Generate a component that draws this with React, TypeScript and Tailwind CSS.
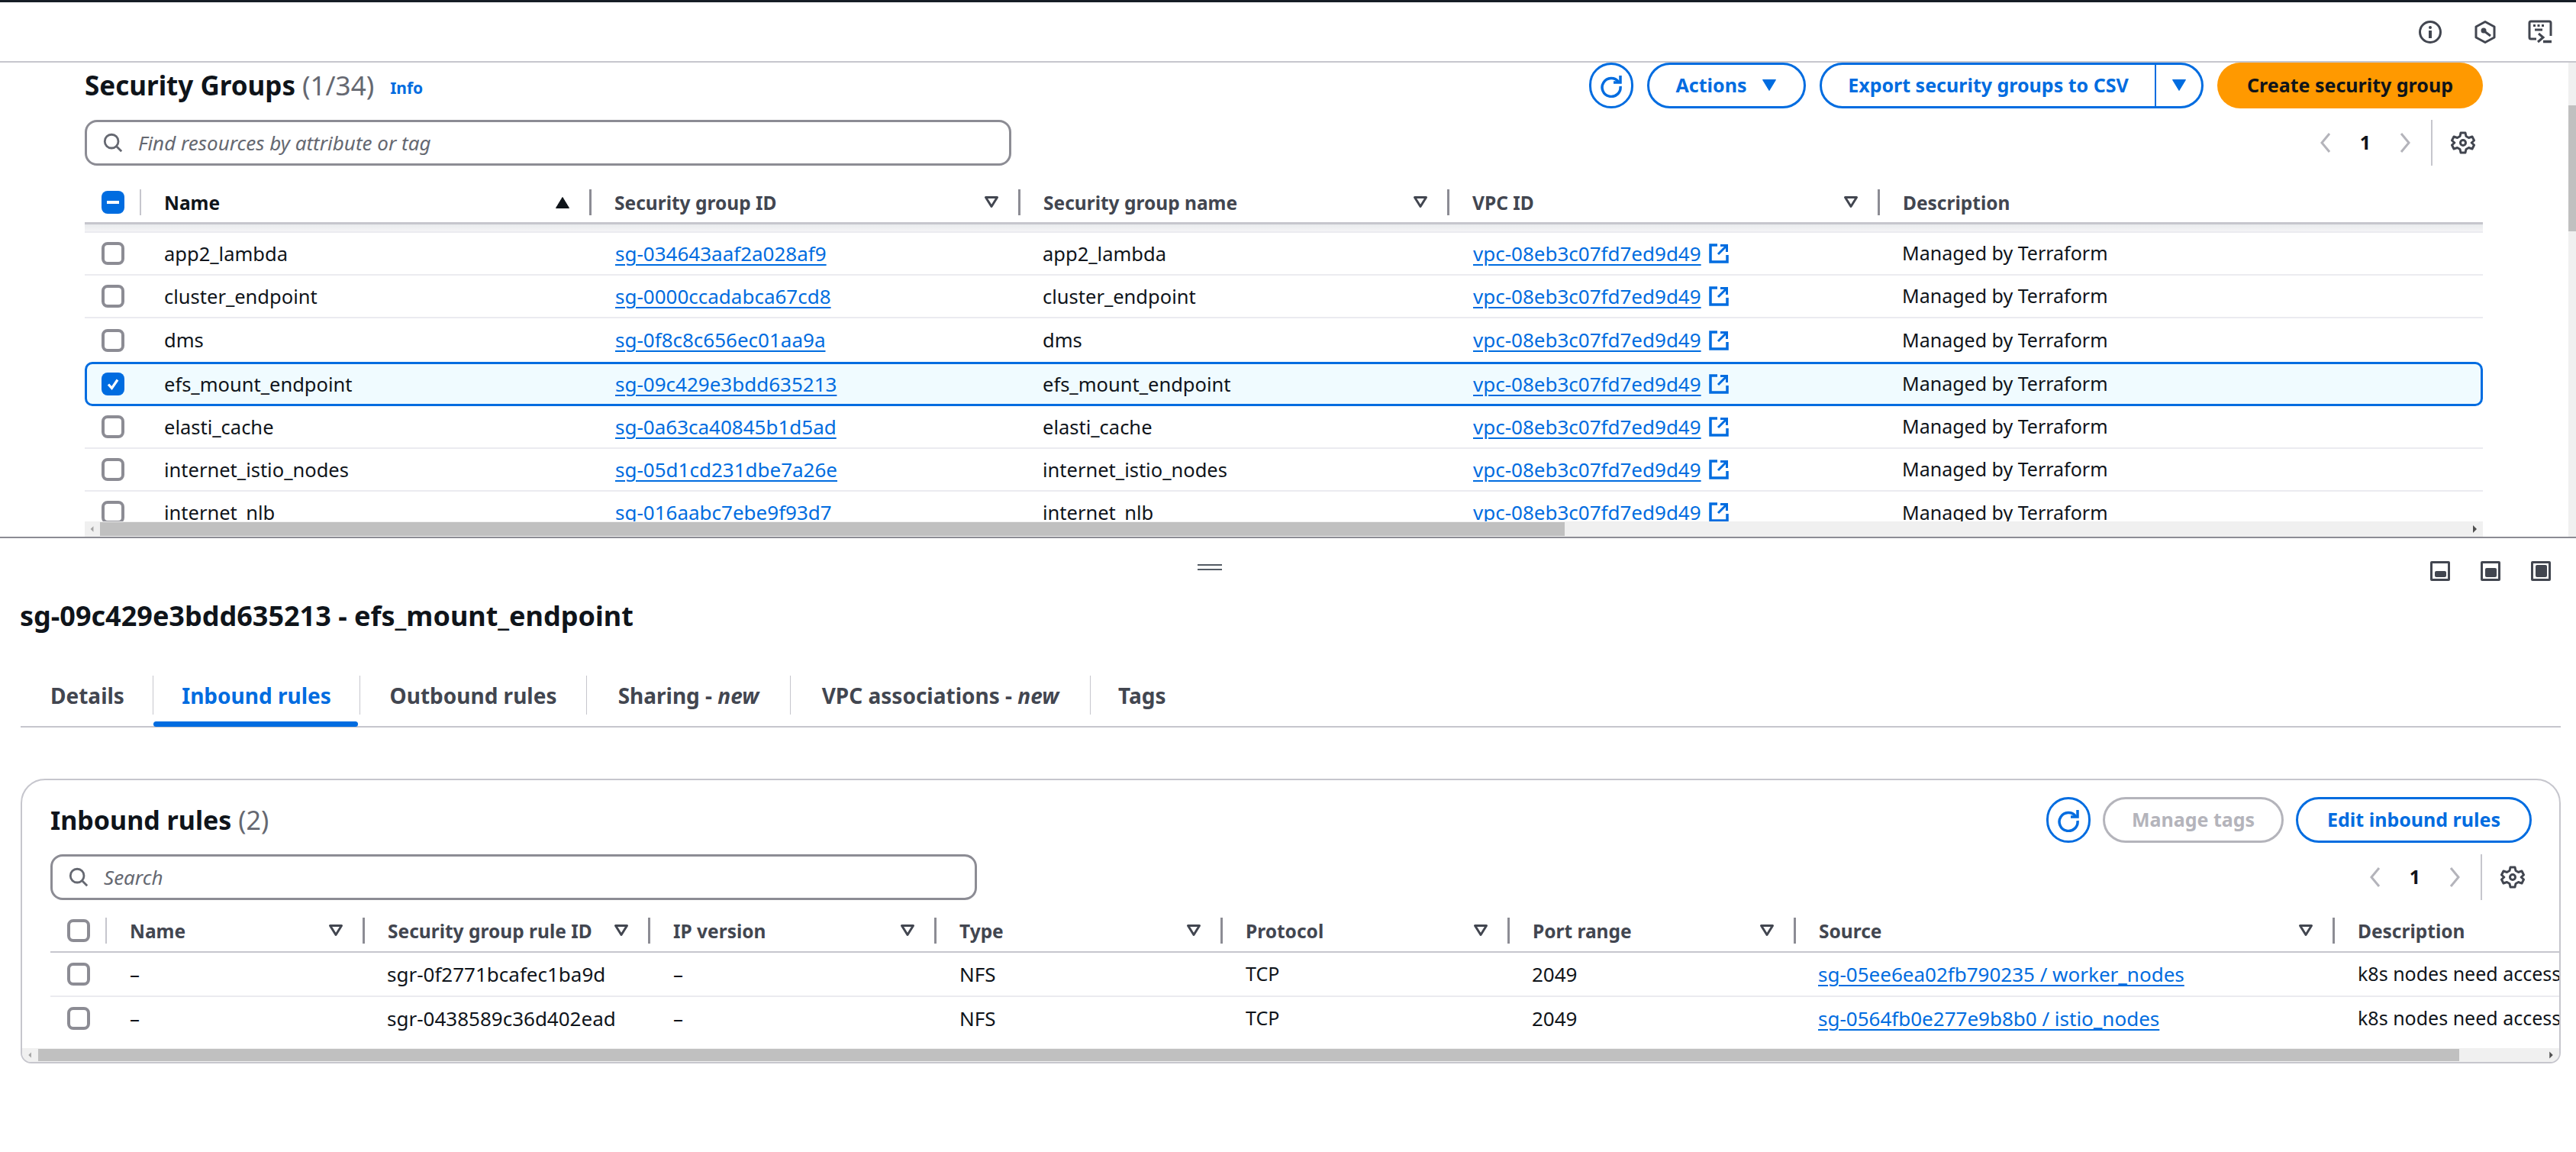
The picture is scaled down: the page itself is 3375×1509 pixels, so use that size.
import React from "react";

const font = { fontFamily: '"Noto Sans", sans-serif' };

function Tri({ dir = "down", color = "#424650", outline = false }: { dir?: "up" | "down"; color?: string; outline?: boolean }) {
  const pts = dir === "down" ? "1.5,2.5 18.5,2.5 10,16.5" : "1.5,17.5 18.5,17.5 10,3.5";
  return (
    <svg width="20" height="20" viewBox="0 0 20 20" className="shrink-0">
      {outline ? <polygon points="2.5,3.5 17.5,3.5 10,15.5" fill="none" stroke={color} strokeWidth="3" strokeLinejoin="round" /> : <polygon points={pts} fill={color} stroke={color} strokeWidth="1" strokeLinejoin="round" />}
    </svg>
  );
}

function Check({ state = "off" }: { state?: "off" | "on" | "mixed" }) {
  if (state === "off") return <span className="block w-[30px] h-[30px] shrink-0 rounded-[8px] border-[4px] border-[#8c8c94] bg-white" />;
  return (
    <span className="flex items-center justify-center w-[30px] h-[30px] shrink-0 rounded-[8px] bg-[#006ce0]">
      {state === "on" ? (
        <svg width="22" height="22" viewBox="0 0 22 22"><path d="M5 11.5 L9.5 16.5 L17 5.5" fill="none" stroke="white" strokeWidth="3.2" /></svg>
      ) : (
        <span className="block w-[16px] h-[4px] bg-white" />
      )}
    </span>
  );
}

function Search({ text, w }: { text: string; w: string }) {
  return (
    <div className={`flex items-center h-[60px] rounded-[16px] border-[3px] border-[#8c8c94] bg-white pl-[20px] ${w}`}>
      <svg width="28" height="28" viewBox="0 0 30 30" className="shrink-0">
        <circle cx="13" cy="13" r="9.5" fill="none" stroke="#656871" strokeWidth="3" />
        <path d="M20 20 L27 27" stroke="#656871" strokeWidth="3" />
      </svg>
      <span className="ml-[19px] text-[26px] italic text-[#656871]">{text}</span>
    </div>
  );
}

function Refresh() {
  return (
    <button className="flex items-center justify-center w-[58px] h-[60px] rounded-full border-[3px] border-[#006ce0] bg-white shrink-0">
      <svg width="32" height="32" viewBox="0 0 32 32">
        <path d="M25.5 11 A12 12 0 1 0 28 17" fill="none" stroke="#006ce0" strokeWidth="3.5" />
        <path d="M28 3 V12 H19" fill="none" stroke="#006ce0" strokeWidth="3.5" />
      </svg>
    </button>
  );
}

function Btn({ w, color = "#006ce0", children }: { w: string; color?: string; children: React.ReactNode }) {
  return (
    <button className={`flex items-center justify-center h-[60px] rounded-full border-[3px] bg-white font-bold text-[25px] shrink-0 ${w}`} style={{ borderColor: color, color }}>
      {children}
    </button>
  );
}

function Gear() {
  return (
    <svg width="32" height="32" viewBox="0 0 32 32" className="shrink-0">
      <path d="M13 3 H19 L20 7.5 L23.5 9.5 L28 8 L30.5 13 L27.2 16 L30.5 19 L28 24 L23.5 22.5 L20 24.5 L19 29 H13 L12 24.5 L8.5 22.5 L4 24 L1.5 19 L4.8 16 L1.5 13 L4 8 L8.5 9.5 L12 7.5 Z" fill="none" stroke="#424650" strokeWidth="3" strokeLinejoin="round" />
      <circle cx="16" cy="16" r="3.5" fill="none" stroke="#424650" strokeWidth="3" />
    </svg>
  );
}

function Pager() {
  return (
    <div className="flex items-center h-[60px]">
      <svg width="16" height="28" viewBox="0 0 16 28"><path d="M13 2 L3 14 L13 26" fill="none" stroke="#b4b4bb" strokeWidth="3" /></svg>
      <span className="text-[25px] font-bold text-[#0f141a] mx-[37px]">1</span>
      <svg width="16" height="28" viewBox="0 0 16 28"><path d="M3 2 L13 14 L3 26" fill="none" stroke="#b4b4bb" strokeWidth="3" /></svg>
      <span className="block w-[2px] h-[60px] bg-[#c6c6cd] ml-[26px] mr-[24px]" />
      <Gear />
    </div>
  );
}

function ExtLink() {
  return (
    <svg width="26" height="26" viewBox="0 0 26 26" className="shrink-0 ml-[10px]">
      <path d="M11 2 H2 V24 H24 V15" fill="none" stroke="#006ce0" strokeWidth="3.5" />
      <path d="M12 14 L22 4 M15 2.5 H23.5 V11" fill="none" stroke="#006ce0" strokeWidth="3" />
    </svg>
  );
}

function Link({ children }: { children: React.ReactNode }) {
  return <a className="text-[26px] text-[#006ce0] underline decoration-2 underline-offset-[4px]">{children}</a>;
}

function HeadCell({ w, label, dark, arrow = "filter", last }: { w: string; label: string; dark?: boolean; arrow?: "filter" | "sort" | "none"; last?: boolean }) {
  return (
    <div className={`flex items-center h-[34px] shrink-0 pl-[30px] ${last ? "" : "pr-[20px]"} ${w}`}>
      <span className={`text-[24.5px] font-bold whitespace-nowrap mt-[3px] ${dark ? "text-[#0f141a]" : "text-[#424650]"}`}>{label}</span>
      <span className="grow" />
      {arrow === "filter" && <Tri outline />}
      {arrow === "sort" && <Tri dir="up" color="#0f141a" />}
      {!last && <span className="block w-[3px] h-[34px] bg-[#8c8c94] ml-[25px] -mr-[20px] shrink-0" />}
    </div>
  );
}

const sgRows = [
  ["app2_lambda", "sg-034643aaf2a028af9"],
  ["cluster_endpoint", "sg-0000ccadabca67cd8"],
  ["dms", "sg-0f8c8c656ec01aa9a"],
  ["efs_mount_endpoint", "sg-09c429e3bdd635213"],
  ["elasti_cache", "sg-0a63ca40845b1d5ad"],
  ["internet_istio_nodes", "sg-05d1cd231dbe7a26e"],
  ["internet_nlb", "sg-016aabc7ebe9f93d7"],
];

function rowClass(i: number) {
  if (i === 3) return "h-[58px] shrink-0 rounded-[10px] border-[3px] border-[#006ce0] bg-[#f0fbff] pl-[19px] items-center";
  if (i === 2) return "h-[57px] shrink-0 pl-[22px] items-center";
  if (i === 6) return "h-[39px] shrink-0 pl-[22px] items-start pt-[12px] leading-[30px]";
  return "h-[56px] shrink-0 border-b-[2px] border-[#ebebf0] pl-[22px] items-center";
}

function SgRow({ name, id, i }: { name: string; id: string; i: number }) {
  return (
    <div className={`flex text-[25.5px] text-[#0f141a] whitespace-nowrap ${rowClass(i)}`}>
      <Check state={i === 3 ? "on" : "off"} />
      <div className="w-[643px] pl-[52px] shrink-0">{name}</div>
      <div className="w-[560px] shrink-0"><Link>{id}</Link></div>
      <div className="w-[564px] shrink-0">{name}</div>
      <div className="w-[562px] shrink-0 flex items-center"><Link>vpc-08eb3c07fd7ed9d49</Link><ExtLink /></div>
      <div className="text-[25px]">Managed by Terraform</div>
    </div>
  );
}

const ruleRows = [
  ["sgr-0f2771bcafec1ba9d", "sg-05ee6ea02fb790235 / worker_nodes"],
  ["sgr-0438589c36d402ead", "sg-0564fb0e277e9b8b0 / istio_nodes"],
];

export default function App() {
  return (
    <div className="relative w-[3375px] h-[1509px] overflow-hidden bg-white text-[#0f141a]" style={font}>
      <div className="h-[3px] bg-[#161d26]" />
      <div className="flex items-center justify-end h-[79px] border-b-[2px] border-[#c6c6cd] gap-[40px] pr-[31px]">
        <svg width="32" height="32" viewBox="0 0 32 32">
          <circle cx="16" cy="16" r="13.5" fill="none" stroke="#424650" strokeWidth="3" />
          <circle cx="16" cy="10" r="2" fill="#424650" />
          <path d="M16 14 V24" stroke="#424650" strokeWidth="4" />
        </svg>
        <svg width="32" height="32" viewBox="0 0 32 32">
          <path d="M16 2.5 L28 9 V23 L16 29.5 L4 23 V9 Z" fill="none" stroke="#424650" strokeWidth="3" strokeLinejoin="round" />
          <circle cx="14" cy="14" r="3.5" fill="#424650" />
          <path d="M15 15 L23 21" stroke="#424650" strokeWidth="3" />
        </svg>
        <svg width="32" height="32" viewBox="0 0 32 32">
          <path d="M11 25 H4 Q2 25 2 23 V4 Q2 2 4 2 H28 Q30 2 30 4 V21" fill="none" stroke="#424650" strokeWidth="3" />
          <path d="M7 7.5 H10 M12.5 7.5 H15.5 M18 7.5 H21" stroke="#424650" strokeWidth="3" />
          <path d="M9 13 H19 M14 18 L20 23 L13 29" fill="none" stroke="#424650" strokeWidth="3" />
          <path d="M20 28.5 H31" stroke="#424650" strokeWidth="3.5" />
        </svg>
      </div>

      <div className="flex h-[621px]">
        <div className="flex flex-col w-[3365px] pl-[111px] pr-[112px] overflow-hidden">
          <div className="flex items-center h-[60px] shrink-0">
            <h1 className="text-[35px] font-bold whitespace-nowrap">Security Groups <span className="font-normal text-[#656871]">(1/34)</span></h1>
            <span className="ml-[21px] mt-[8px] text-[21px] font-bold text-[#006ce0]">Info</span>
            <span className="grow" />
            <div className="flex items-center gap-[18px]">
              <Refresh />
              <Btn w="w-[208px]"><span>Actions</span><span className="ml-[20px]"><Tri color="#006ce0" /></span></Btn>
              <div className="flex items-center w-[503px] h-[60px] rounded-full border-[3px] border-[#006ce0] font-bold text-[25px] text-[#006ce0] shrink-0">
                <span className="flex items-center justify-center w-[438px] h-full border-r-[2px] border-[#006ce0]">Export security groups to CSV</span>
                <span className="flex items-center justify-center grow"><Tri color="#006ce0" /></span>
              </div>
              <button className="flex items-center justify-center w-[348px] h-[60px] rounded-full bg-[#ff9900] font-bold text-[25px] text-[#0f141a] shrink-0">Create security group</button>
            </div>
          </div>
          <div className="flex items-center justify-between mt-[15px] h-[60px] shrink-0 pr-[10px]">
            <Search text="Find resources by attribute or tag" w="w-[1214px]" />
            <Pager />
          </div>
          <div className="flex items-center h-[77px] shrink-0 pl-[22px] pt-[21px] border-b-[3px] border-[#c6c6cd]">
            <Check state="mixed" />
            <span className="block w-[2px] h-[34px] bg-[#c6c6cd] ml-[20px] shrink-0" />
            <HeadCell w="w-[590px]" label="Name" dark arrow="sort" />
            <HeadCell w="w-[562px]" label="Security group ID" />
            <HeadCell w="w-[562px]" label="Security group name" />
            <HeadCell w="w-[564px]" label="VPC ID" />
            <HeadCell w="w-[400px]" label="Description" arrow="none" last />
          </div>
          <div className="h-[11px] shrink-0 bg-gradient-to-b from-[#e9ebed] to-[#f4f4f6] border-b-[2px] border-[#ebebf0]" />
          <div className="flex flex-col h-[378px] overflow-hidden shrink-0">
            {sgRows.map((r, i) => (
              <SgRow key={r[1]} name={r[0]} id={r[1]} i={i} />
            ))}
          </div>
          <div className="flex items-center h-[20px] shrink-0 bg-[#f0f0f0]">
            <svg width="20" height="20" viewBox="0 0 21 20" className="shrink-0"><polygon points="12,6 8,10 12,14" fill="#a3a3a3" /></svg>
            <span className="block w-[1919px] h-[18px] bg-[#c0c0c0]" />
            <span className="grow" />
            <svg width="21" height="20" viewBox="0 0 21 20" className="shrink-0"><polygon points="8,5 13,10 8,15" fill="#505050" /></svg>
          </div>
        </div>
        <div className="flex flex-col items-center w-[10px] bg-[#f0f0f0] shrink-0">
          <div className="h-[56px] w-full" />
          <div className="w-full h-[165px] bg-[#c0c0c0]" />
        </div>
      </div>

      <div className="h-[2px] bg-[#8c8c94]" />

      <div className="relative h-[100px] flex flex-col pl-[26px] pt-[34px]">
        <div className="flex flex-col gap-[4px] w-[32px] ml-[1543px]">
          <span className="block w-full h-[2px] bg-[#545b64]" />
          <span className="block w-full h-[2px] bg-[#545b64]" />
        </div>
        <div className="absolute right-[33px] top-[30px] flex gap-[40px]">
          {["h-[8px]", "h-[12px]", "h-[16px]"].map((c, i) => (
            <span key={i} className="flex items-end justify-center w-[26px] h-[26px] border-[3px] border-[#424650] rounded-[2px] p-[2px]">
              <span className={`block w-[15px] ${c} bg-[#424650] rounded-[2px]`} />
            </span>
          ))}
        </div>
      </div>

      <div className="pl-[26px] -mt-[20px]">
        <h2 className="text-[36px] font-bold whitespace-nowrap leading-[44px]">sg-09c429e3bdd635213 - efs_mount_endpoint</h2>
      </div>

      <div className="ml-[27px] mr-[20px] mt-[56px] flex items-start h-[68px] border-b-[2px] border-[#c6c6cd] text-[28px] font-bold text-[#424650]">
        <div className="flex items-center w-[174px] h-[51px] pl-[39px] shrink-0 border-r border-[#c6c6cd]">Details</div>
        <div className="relative flex items-center justify-center w-[271px] h-[51px] text-[#006ce0] shrink-0 border-r border-[#c6c6cd]">
          Inbound rules
          <span className="absolute left-0 right-[2px] top-[60px] h-[7px] bg-[#006ce0] rounded-[4px]" />
        </div>
        <div className="flex items-center justify-center w-[297px] shrink-0 h-[51px] border-r border-[#c6c6cd]">Outbound rules</div>
        <div className="flex items-center justify-center w-[267px] shrink-0 h-[51px] border-r border-[#c6c6cd]">Sharing -&nbsp;<i>new</i></div>
        <div className="flex items-center justify-center w-[393px] shrink-0 h-[51px] border-r border-[#c6c6cd]">VPC associations -&nbsp;<i>new</i></div>
        <div className="flex items-center h-[51px] pl-[36px]">Tags</div>
      </div>

      <div className="ml-[27px] mr-[20px] mt-[67px] h-[373px] rounded-t-[32px] rounded-b-[14px] border-[2px] border-[#c6c6cd] overflow-hidden flex flex-col">
        <div className="flex items-center h-[60px] mt-[22px] ml-[37px] mr-[36px] shrink-0">
          <h3 className="text-[34px] font-bold whitespace-nowrap">Inbound rules <span className="font-normal text-[#656871]">(2)</span></h3>
          <span className="grow" />
          <div className="flex items-center gap-[16px]">
            <Refresh />
            <Btn w="w-[237px]" color="#b4b4bb">Manage tags</Btn>
            <Btn w="w-[309px]">Edit inbound rules</Btn>
          </div>
        </div>
        <div className="flex items-center justify-between ml-[37px] mr-[45px] mt-[15px] h-[60px] shrink-0">
          <Search text="Search" w="w-[1214px]" />
          <Pager />
        </div>
        <div className="flex items-center h-[69px] ml-[37px] shrink-0 border-b-[2px] border-[#c6c6cd] pl-[22px] pt-[13px]">
          <Check />
          <span className="block w-[2px] h-[34px] bg-[#c6c6cd] ml-[20px] shrink-0" />
          <HeadCell w="w-[338px]" label="Name" />
          <HeadCell w="w-[374px]" label="Security group rule ID" />
          <HeadCell w="w-[375px]" label="IP version" />
          <HeadCell w="w-[375px]" label="Type" />
          <HeadCell w="w-[376px]" label="Protocol" />
          <HeadCell w="w-[375px]" label="Port range" />
          <HeadCell w="w-[706px]" label="Source" />
          <HeadCell w="w-[300px]" label="Description" arrow="none" last />
        </div>
        {ruleRows.map((r, i) => (
          <div key={r[0]} className={`flex items-center ml-[37px] shrink-0 pl-[22px] text-[26px] whitespace-nowrap ${i === 0 ? "h-[58px] border-b-[2px] border-[#ebebf0]" : "h-[56px]"}`}>
            <Check />
            <div className="w-[389px] pl-[52px] shrink-0">–</div>
            <div className="w-[375px] shrink-0">{r[0]}</div>
            <div className="w-[375px] shrink-0">–</div>
            <div className="w-[375px] shrink-0">NFS</div>
            <div className="w-[375px] shrink-0 text-[25px]">TCP</div>
            <div className="w-[375px] shrink-0">2049</div>
            <div className="w-[707px] shrink-0"><Link>{r[1]}</Link></div>
            <div className="text-[25px]">k8s nodes need access</div>
          </div>
        ))}
        <div className="grow" />
        <div className="flex items-center h-[18px] shrink-0 bg-[#f0f0f0]">
          <svg width="21" height="18" viewBox="0 0 21 20" className="shrink-0"><polygon points="12,6 8,10 12,14" fill="#a3a3a3" /></svg>
          <span className="block w-[3172px] h-[16px] bg-[#c0c0c0]" />
          <span className="grow" />
          <svg width="21" height="18" viewBox="0 0 21 20" className="shrink-0"><polygon points="8,5 13,10 8,15" fill="#505050" /></svg>
        </div>
      </div>
    </div>
  );
}
